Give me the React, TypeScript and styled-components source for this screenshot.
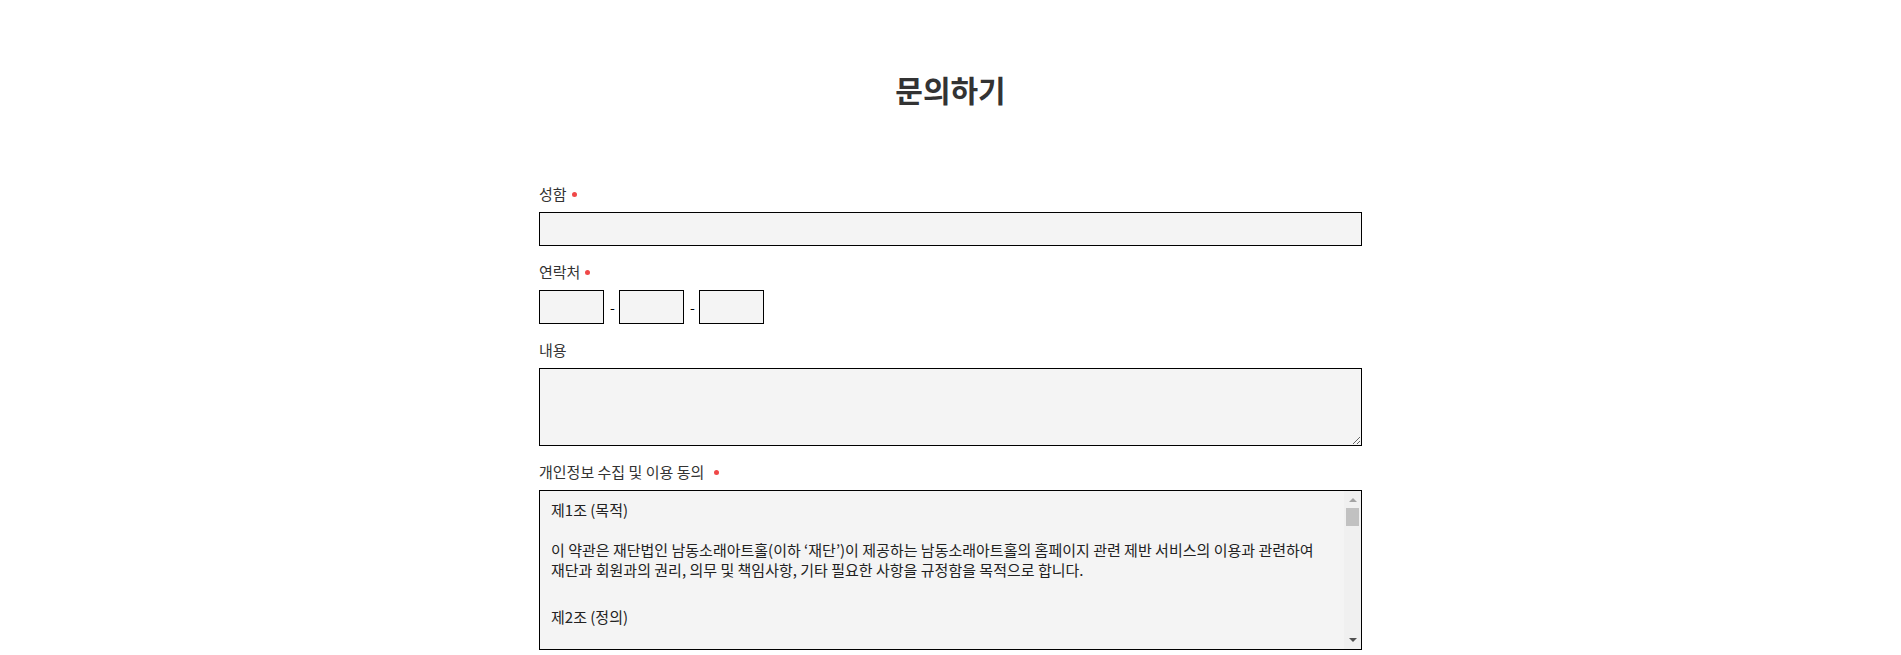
import React, { useLayoutEffect, useRef, useState } from "react";
import styled, { createGlobalStyle } from "styled-components";

const GlobalStyle = createGlobalStyle`
  html, body {
    margin: 0;
    padding: 0;
    background: #ffffff;
  }
  body {
    font-family: "Noto Sans CJK KR", "Noto Sans", sans-serif;
    color: #333333;
  }
  * { box-sizing: border-box; }
`;

const Page = styled.main`
  padding-top: 71px;
`;

const Title = styled.h1`
  margin: 0 0 79px;
  font-size: 30px;
  line-height: 36px;
  font-weight: 700;
  text-align: center;
  color: #333333;
`;

const Form = styled.form`
  width: 823px;
  margin: 0 auto;
  display: flex;
  flex-direction: column;
  gap: 18px;
`;

const Field = styled.div`
  display: flex;
  flex-direction: column;
  gap: 6px;
`;

const Label = styled.label`
  font-size: 15px;
  line-height: 16px;
  padding-bottom: 4px;
  color: #333333;
  display: flex;
  align-items: center;
`;

const Required = styled.span<{ $gap?: number }>`
  display: inline-block;
  width: 5px;
  height: 5px;
  border-radius: 50%;
  background: #f04848;
  margin-left: ${(p) => p.$gap ?? 5}px;
`;

const TextInput = styled.input<{ $width?: number }>`
  display: block;
  width: ${(p) => (p.$width ? `${p.$width}px` : "100%")};
  height: 34px;
  margin: 0;
  padding: 0 10px;
  border: 1px solid #000000;
  border-radius: 0;
  background: #f4f4f4;
  font-family: inherit;
  font-size: 14px;
  outline: none;
`;

const PhoneRow = styled.div`
  display: flex;
  align-items: center;
  gap: 6px;
`;

const Dash = styled.span`
  font-size: 14px;
  line-height: 20px;
  color: #000000;
  width: 3px;
  text-align: center;
`;

const TextArea = styled.textarea`
  display: block;
  width: 100%;
  height: 78px;
  margin: 0;
  padding: 8px 10px;
  border: 1px solid #000000;
  border-radius: 0;
  background: #f4f4f4;
  font-family: inherit;
  font-size: 14px;
  resize: vertical;
  outline: none;
`;

const TermsFrame = styled.div`
  position: relative;
  height: 160px;
  border: 1px solid #000000;
  background: #f4f4f4;
`;

const TermsBox = styled.div`
  height: 100%;
  overflow-y: scroll;
  padding: 9px 28px 9px 11px;
  font-size: 15px;
  line-height: 20px;
  color: #222222;
  scrollbar-width: none;
  &::-webkit-scrollbar {
    display: none;
  }
`;

const Rail = styled.div`
  position: absolute;
  top: 0;
  right: 0;
  bottom: 0;
  width: 17px;
  background: #f0f0f0;
  pointer-events: none;
`;

const RailButton = styled.div<{ $end?: boolean }>`
  position: absolute;
  left: 0;
  width: 17px;
  height: 17px;
  display: flex;
  justify-content: center;
  align-items: ${(p) => (p.$end ? "flex-start" : "flex-end")};
  ${(p) => (p.$end ? "bottom: 0; padding-top: 6px;" : "top: 0; padding-bottom: 6px;")}
`;

const Arrow = styled.span<{ $down?: boolean }>`
  width: 0;
  height: 0;
  border-left: 4px solid transparent;
  border-right: 4px solid transparent;
  ${(p) =>
    p.$down
      ? "border-top: 4px solid #505050;"
      : "border-bottom: 4px solid #a3a3a3;"}
`;

const Thumb = styled.div`
  position: absolute;
  left: 2px;
  right: 2px;
  background: #c1c1c1;
`;

const Article = styled.section`
  margin-bottom: 27px;
`;

const ArticleTitle = styled.p`
  margin: 0 0 20px;
`;

const ArticleBody = styled.p`
  margin: 0;
`;

const articles: { title: string; body: string[] }[] = [
  {
    title: "제1조 (목적)",
    body: [
      "이 약관은 재단법인 남동소래아트홀(이하 ‘재단’)이 제공하는 남동소래아트홀의 홈페이지 관련 제반 서비스의 이용과 관련하여",
      "재단과 회원과의 권리, 의무 및 책임사항, 기타 필요한 사항을 규정함을 목적으로 합니다.",
    ],
  },
  {
    title: "제2조 (정의)",
    body: [
      "이 약관에서 사용하는 용어의 정의는 다음과 같습니다.",
      "1. ‘서비스’라 함은 구현되는 단말기와 상관없이 회원이 이용할 수 있는 재단의 홈페이지 관련 제반 서비스를 의미합니다.",
      "2. ‘회원’이라 함은 재단의 서비스에 접속하여 이 약관에 따라 재단과 이용계약을 체결하고 서비스를 이용하는 고객을 말합니다.",
      "3. ‘아이디(ID)’라 함은 회원의 식별과 서비스 이용을 위하여 회원이 정하고 재단이 승인하는 문자와 숫자의 조합을 의미합니다.",
      "4. ‘비밀번호’라 함은 회원이 부여 받은 아이디와 일치되는 회원임을 확인하고 비밀보호를 위해 회원 자신이 정한 문자 또는 숫자의 조합을 의미합니다.",
    ],
  },
  {
    title: "제3조 (약관의 게시와 개정)",
    body: [
      "1. 재단은 이 약관의 내용을 회원이 쉽게 알 수 있도록 서비스 초기 화면에 게시합니다.",
      "2. 재단은 관련 법령을 위배하지 않는 범위에서 이 약관을 개정할 수 있습니다.",
      "3. 재단이 약관을 개정할 경우에는 적용일자 및 개정사유를 명시하여 현행약관과 함께 그 적용일자 7일 전부터 공지합니다.",
    ],
  },
  {
    title: "제4조 (개인정보의 수집 및 이용)",
    body: [
      "1. 수집항목 : 성함, 연락처, 문의 내용",
      "2. 수집목적 : 문의 사항 확인 및 답변, 원활한 의사소통 경로의 확보",
      "3. 보유기간 : 문의 처리 완료 후 1년간 보관 후 파기합니다.",
      "4. 이용자는 개인정보 수집 및 이용에 동의하지 않을 권리가 있으며, 동의하지 않을 경우 문의 접수가 제한될 수 있습니다.",
    ],
  },
  {
    title: "제5조 (개인정보의 파기)",
    body: [
      "재단은 개인정보 보유기간의 경과, 처리목적 달성 등 개인정보가 불필요하게 되었을 때에는 지체없이 해당 개인정보를 파기합니다.",
      "전자적 파일 형태의 정보는 기록을 재생할 수 없는 기술적 방법을 사용하며, 종이에 출력된 개인정보는 분쇄기로 분쇄하거나 소각합니다.",
    ],
  },
  {
    title: "제6조 (개인정보의 제3자 제공)",
    body: [
      "재단은 이용자의 개인정보를 수집 및 이용 목적에서 명시한 범위 내에서만 처리하며, 이용자의 사전 동의 없이는 본래의 범위를 초과하여 처리하거나 제3자에게 제공하지 않습니다.",
      "다만, 법령의 규정에 의거하거나 수사 목적으로 법령에 정해진 절차와 방법에 따라 수사기관의 요구가 있는 경우는 예외로 합니다.",
    ],
  },
  {
    title: "제7조 (이용자의 권리와 의무)",
    body: [
      "1. 이용자는 언제든지 등록되어 있는 자신의 개인정보를 열람하거나 정정을 요청할 수 있습니다.",
      "2. 이용자는 개인정보 수집 및 이용에 대한 동의를 언제든지 철회할 수 있습니다.",
      "3. 이용자는 자신의 개인정보를 최신의 상태로 정확하게 입력하여 불의의 사고를 예방하여야 합니다.",
    ],
  },
  {
    title: "제8조 (개인정보 보호책임자)",
    body: [
      "재단은 개인정보 처리에 관한 업무를 총괄해서 책임지고, 개인정보 처리와 관련한 이용자의 불만처리 및 피해구제 등을 위하여 개인정보 보호책임자를 지정하고 있습니다.",
      "이용자는 서비스를 이용하면서 발생한 모든 개인정보 보호 관련 문의를 개인정보 보호책임자에게 문의하실 수 있습니다.",
    ],
  },
];

const BUTTON = 17;

function Terms() {
  const boxRef = useRef<HTMLDivElement>(null);
  const [thumb, setThumb] = useState({ top: BUTTON, height: 17 });

  const update = () => {
    const el = boxRef.current;
    if (!el) return;
    const track = el.clientHeight - BUTTON * 2;
    const ratio = el.clientHeight / el.scrollHeight;
    const height = Math.max(17, Math.round(track * ratio));
    const maxScroll = el.scrollHeight - el.clientHeight;
    const progress = maxScroll > 0 ? el.scrollTop / maxScroll : 0;
    setThumb({ top: BUTTON + Math.round((track - height) * progress), height });
  };

  useLayoutEffect(() => {
    update();
  }, []);

  return (
    <TermsFrame>
      <TermsBox ref={boxRef} onScroll={update}>
        {articles.map((a) => (
          <Article key={a.title}>
            <ArticleTitle>{a.title}</ArticleTitle>
            {a.body.map((line, i) => (
              <ArticleBody key={i}>{line}</ArticleBody>
            ))}
          </Article>
        ))}
      </TermsBox>
      <Rail aria-hidden>
        <RailButton>
          <Arrow />
        </RailButton>
        <Thumb style={{ top: thumb.top, height: thumb.height }} />
        <RailButton $end>
          <Arrow $down />
        </RailButton>
      </Rail>
    </TermsFrame>
  );
}

export default function App() {
  return (
    <>
      <GlobalStyle />
      <Page>
        <Title>문의하기</Title>
        <Form onSubmit={(e) => e.preventDefault()}>
          <Field>
            <Label htmlFor="name">
              성함
              <Required />
            </Label>
            <TextInput id="name" type="text" />
          </Field>

          <Field>
            <Label htmlFor="phone1">
              연락처
              <Required />
            </Label>
            <PhoneRow>
              <TextInput id="phone1" type="text" $width={65} />
              <Dash>-</Dash>
              <TextInput type="text" $width={65} />
              <Dash>-</Dash>
              <TextInput type="text" $width={65} />
            </PhoneRow>
          </Field>

          <Field>
            <Label htmlFor="content">내용</Label>
            <TextArea id="content" />
          </Field>

          <Field>
            <Label>
              개인정보 수집 및 이용 동의
              <Required $gap={10} />
            </Label>
            <Terms />
          </Field>
        </Form>
      </Page>
    </>
  );
}
